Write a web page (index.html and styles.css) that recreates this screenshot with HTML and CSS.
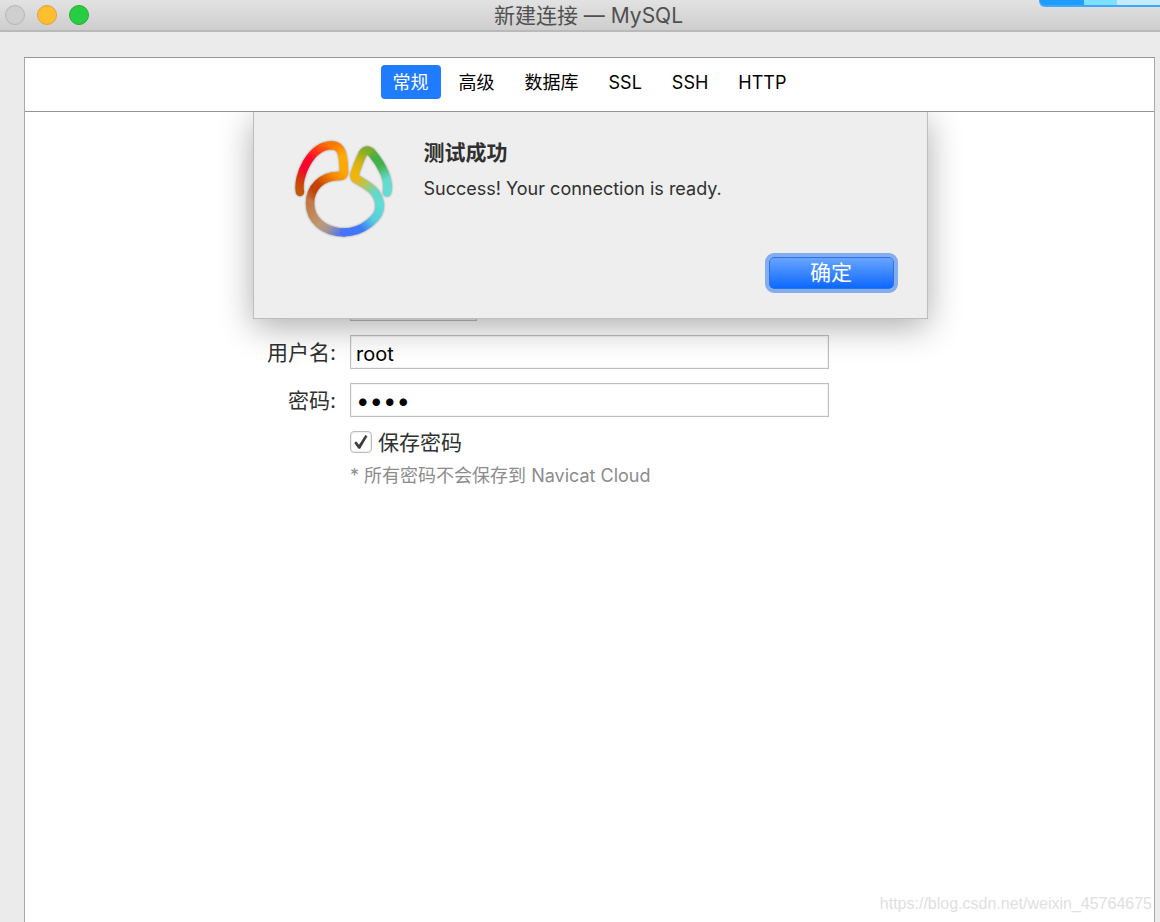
FILE: index.html
```html
<!DOCTYPE html>
<html lang="zh-CN">
<head>
<meta charset="utf-8">
<meta name="viewport" content="width=device-width, initial-scale=1">
<title>新建连接 — MySQL</title>
<link rel="stylesheet" href="styles.css">
</head>
<body>
<header class="titlebar">
  <div class="lights">
    <button class="light light-off" type="button" aria-label="关闭"></button>
    <button class="light light-min" type="button" aria-label="最小化"></button>
    <button class="light light-max" type="button" aria-label="缩放"></button>
  </div>
  <h1 class="title">新建连接 — MySQL</h1>
  <div class="corner-strip"></div>
</header>
<main class="panel">
  <nav class="tabs">
    <button class="tab tab-active" type="button">常规</button>
    <button class="tab" type="button">高级</button>
    <button class="tab" type="button">数据库</button>
    <button class="tab" type="button">SSL</button>
    <button class="tab" type="button">SSH</button>
    <button class="tab" type="button">HTTP</button>
  </nav>
  <div class="content">
    <form class="form">
      <input class="field field-port" type="text" aria-label="端口">
      <label class="label" for="user">用户名:</label>
      <input class="field" id="user" type="text" value="root">
      <label class="label" for="password">密码:</label>
      <input class="field field-password" id="password" type="password" value="root">
      <div class="save">
        <input class="check" id="save" type="checkbox" checked>
        <label class="save-label" for="save">保存密码</label>
      </div>
      <p class="note">* 所有密码不会保存到 Navicat Cloud</p>
    </form>
    <section class="dialog" role="alertdialog" aria-labelledby="dialog-title">
      <svg class="logo" viewBox="0 0 390 375" aria-hidden="true">
        <defs>
          <linearGradient id="g1" gradientUnits="userSpaceOnUse" x1="62" y1="202" x2="155" y2="61"><stop offset="0" stop-color="#c05a08"/><stop offset=".18" stop-color="#d13a0c"/><stop offset=".38" stop-color="#ff0030"/><stop offset=".6" stop-color="#ff0a28"/><stop offset="1" stop-color="#ff7600"/></linearGradient>
          <linearGradient id="g2" gradientUnits="userSpaceOnUse" x1="155" y1="61" x2="192" y2="140"><stop offset="0" stop-color="#ff7600"/><stop offset=".5" stop-color="#ffac00"/><stop offset="1" stop-color="#ffa600"/></linearGradient>
          <linearGradient id="g3" gradientUnits="userSpaceOnUse" x1="192" y1="140" x2="90" y2="235"><stop offset="0" stop-color="#ffa600"/><stop offset=".2" stop-color="#fb8d00"/><stop offset=".58" stop-color="#c84400"/><stop offset=".75" stop-color="#c04205"/><stop offset="1" stop-color="#c27946"/></linearGradient>
          <linearGradient id="g4" gradientUnits="userSpaceOnUse" x1="90" y1="235" x2="192" y2="322"><stop offset="0" stop-color="#c27946"/><stop offset=".45" stop-color="#c0986e"/><stop offset=".65" stop-color="#a99691"/><stop offset="1" stop-color="#4873fb"/></linearGradient>
          <linearGradient id="g5" gradientUnits="userSpaceOnUse" x1="192" y1="322" x2="299" y2="240"><stop offset="0" stop-color="#4873fb"/><stop offset=".35" stop-color="#3d78ff"/><stop offset=".68" stop-color="#57ccdc"/><stop offset="1" stop-color="#5dddd4"/></linearGradient>
          <linearGradient id="g6" gradientUnits="userSpaceOnUse" x1="299" y1="240" x2="226" y2="160"><stop offset="0" stop-color="#5dddd4"/><stop offset=".35" stop-color="#64d9c5"/><stop offset=".7" stop-color="#b5c657"/><stop offset="1" stop-color="#f1b40a"/></linearGradient>
          <linearGradient id="g7" gradientUnits="userSpaceOnUse" x1="226" y1="145" x2="262" y2="77"><stop offset="0" stop-color="#f1b40a"/><stop offset=".4" stop-color="#d9b40c"/><stop offset="1" stop-color="#7cae2a"/></linearGradient>
          <linearGradient id="g8" gradientUnits="userSpaceOnUse" x1="262" y1="77" x2="321" y2="202"><stop offset="0" stop-color="#7cae2a"/><stop offset=".22" stop-color="#42b046"/><stop offset=".42" stop-color="#45b34e"/><stop offset=".74" stop-color="#62dccb"/><stop offset="1" stop-color="#60ddd5"/></linearGradient>
        </defs>
        <g fill="none" stroke-width="25" stroke-linecap="round" stroke-linejoin="round">
          <path stroke="url(#g1)" d="M60 201C50 156 91 61 155 61"/>
          <path stroke="url(#g2)" d="M155 61C185 61 190 86 192 140"/>
          <path stroke="url(#g3)" d="M192 140Q192 152 180 153C124 151 90 190 90 235"/>
          <path stroke="url(#g4)" d="M90 235C90 286 134 322 192 322"/>
          <path stroke="url(#g8)" d="M262 77Q271 77 278 87C304 118 330 165 321 202"/>
          <path stroke="url(#g7)" d="M226 160Q221 152 226 141C234 119 241 98 250 83Q255 76 262 77"/>
          <path stroke="url(#g6)" d="M299 240C295 195 260 181 226 160"/>
          <path stroke="url(#g5)" d="M192 322C248 322 303 277 299 240"/>
        </g>
      </svg>
      <div class="message">
        <h2 class="dialog-title" id="dialog-title">测试成功</h2>
        <p class="dialog-text">Success! Your connection is ready.</p>
      </div>
      <button class="ok" type="button">确定</button>
    </section>
  </div>
  <div class="watermark">https://blog.csdn.net/weixin_45764675</div>
</main>
</body>
</html>
```

FILE: styles.css
```css
* {
  box-sizing: border-box;
}

body {
  margin: 0;
  min-height: 100vh;
  display: flex;
  flex-direction: column;
  background: #ebebeb;
  color: #303030;
  font-family: Inter, "Noto Sans CJK SC", sans-serif;
}

h1, h2, p {
  margin: 0;
  font-weight: 400;
}

button, input {
  font-family: inherit;
}

.titlebar {
  position: relative;
  display: grid;
  grid-template-columns: 1fr auto 1fr;
  align-items: center;
  height: 32px;
  padding: 0 0 2px 5px;
  border-bottom: 2px solid #b9b9b9;
  background: linear-gradient(#e2e2e2, #cecece);
}

.lights {
  display: flex;
  gap: 12px;
}

.light {
  width: 20px;
  height: 20px;
  padding: 0;
  border: 1px solid #b5b5b5;
  border-radius: 50%;
  background: #cfcfcf;
}

.light-min {
  border-color: #dfa33a;
  background: #ffbe2f;
}

.light-max {
  border-color: #27aa35;
  background: #28ce41;
}

.title {
  padding: 2px 0 0 12px;
  color: #505050;
  font-size: 21px;
  line-height: 28px;
}

.corner-strip {
  position: absolute;
  top: 0;
  right: 0;
  width: 121px;
  height: 7px;
  border-bottom: 2px solid #3fa8fb;
  border-left: 1px solid #3fa8fb;
  border-bottom-left-radius: 6px;
  background: linear-gradient(90deg, #1f9dff 44px, #7fe0ff 44px 77px, #c6ecff 77px);
}

.panel {
  position: relative;
  flex: 1;
  display: flex;
  flex-direction: column;
  margin: 25px 5px 0 24px;
  border: 1px solid #a9a9a9;
  border-top-color: #959595;
  border-bottom: 0;
  background: #fff;
}

.tabs {
  display: flex;
  justify-content: center;
  align-items: center;
  gap: 6px;
  height: 54px;
  padding-bottom: 5px;
  border-bottom: 1px solid #959595;
}

.tab {
  height: 34px;
  padding: 2px 12px 0;
  border: 0;
  border-radius: 4px;
  background: none;
  color: #000;
  font-size: 18px;
  line-height: 32px;
}

.tab-active {
  background: #1f7bff;
  color: #fff;
}

.content {
  position: relative;
  flex: 1;
}

.form {
  display: grid;
  grid-template-columns: 311px minmax(0, 479px);
  column-gap: 14px;
  row-gap: 14px;
  padding-top: 175px;
}

.label {
  padding-top: 2px;
  text-align: right;
  font-size: 21px;
  line-height: 32px;
}

.field {
  width: 100%;
  height: 34px;
  padding: 4px 5px 0;
  border: 1px solid #bfbfbf;
  border-radius: 0;
  background: #fff;
  box-shadow: inset 0 0 0 1px #f3f3f3;
  color: #000;
  font-size: 20px;
}

.field-port {
  grid-column: 2;
  width: 127px;
}

.field-password {
  padding-top: 0;
  font-size: 24px;
}

.save {
  grid-column: 2;
  display: flex;
  align-items: center;
  gap: 6px;
  height: 22px;
}

.check {
  appearance: none;
  width: 22px;
  height: 22px;
  margin: 0;
  border: 1px solid #bcbcbc;
  border-radius: 4px;
  background: #fff;
  box-shadow: inset 0 0 1px 1px #eee;
  display: grid;
  place-items: center;
}

.check:checked::before {
  content: "";
  width: 14px;
  height: 14px;
  background: #3d3d3d;
  clip-path: polygon(2% 57%, 15% 45%, 36% 70%, 81% 0, 96% 9%, 44% 98%, 32% 98%);
}

.save-label {
  padding-top: 2px;
  font-size: 21px;
  line-height: 24px;
}

.note {
  grid-column: 2;
  color: #8c8c8c;
  font-size: 18px;
  line-height: 24px;
  margin-top: -3px;
}

.dialog {
  position: absolute;
  top: 0;
  left: 50%;
  width: 675px;
  margin-left: -337px;
  display: grid;
  grid-template-columns: 130px 1fr;
  column-gap: 14px;
  padding: 13px 29px 25px 26px;
  border: 1px solid #bdbdbd;
  border-top: 0;
  background: #eee;
  box-shadow: 0 8px 32px rgba(0, 0, 0, .32);
  clip-path: inset(0 -60px -60px -60px);
}

.logo {
  width: 130px;
  height: 125px;
  filter: drop-shadow(0 0 1px rgba(0, 0, 0, .4));
}

.message {
  padding-top: 12px;
}

.dialog-title {
  font-size: 21px;
  font-weight: 600;
  line-height: 32px;
}

.dialog-text {
  margin-top: 8px;
  font-size: 18px;
  line-height: 24px;
}

.ok {
  grid-column: 2;
  justify-self: end;
  width: 133px;
  height: 40px;
  margin-top: 3px;
  padding: 0;
  border: 4px solid #83adee;
  border-radius: 9px;
  background: linear-gradient(#6ba7ff, #0a66ff) padding-box;
  box-shadow: inset 0 0 0 1px #2f71e0;
  color: #fff;
  font-size: 21px;
  line-height: 32px;
}

.watermark {
  padding: 0 2px 6px 0;
  text-align: right;
  color: #e0e0e0;
  font-family: "Liberation Sans", Arial, sans-serif;
  font-size: 16px;
  line-height: 24px;
}
```
